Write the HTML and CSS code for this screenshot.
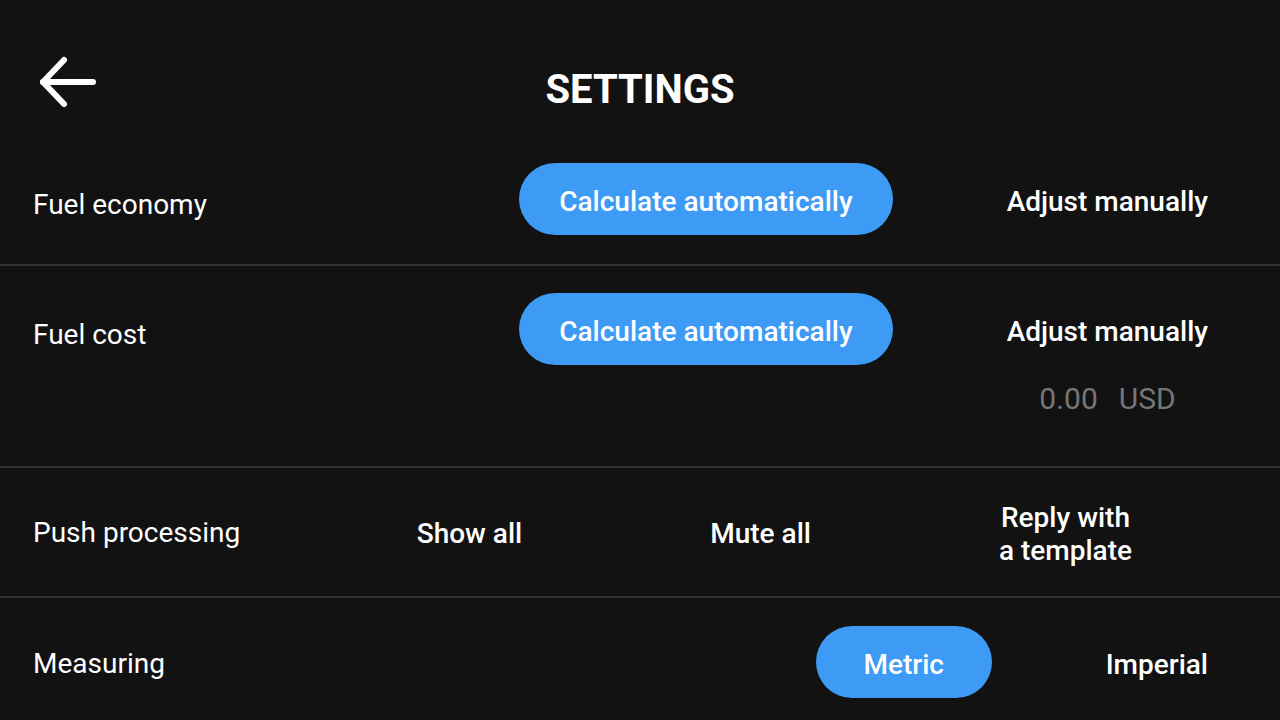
FILE: index.html
```html
<!DOCTYPE html>
<html lang="en">
<head>
<meta charset="utf-8">
<title>Settings</title>
<link rel="stylesheet" href="styles.css">
</head>
<body>
<div class="screen">
  <header class="header">
    <button class="back" aria-label="Back">
      <svg width="62" height="56" viewBox="0 0 62 56" fill="none" stroke="#fff" stroke-width="6" stroke-linecap="round" stroke-linejoin="round">
        <path d="M6 27 H56"/>
        <path d="M27 5 L6 27 L27 49"/>
      </svg>
    </button>
    <h1 class="title">SETTINGS</h1>
  </header>

  <section class="row">
    <div class="label low">Fuel economy</div>
    <div class="options">
      <span class="opt active">Calculate automatically</span>
      <span class="opt">Adjust manually</span>
    </div>
  </section>

  <section class="row row-tall">
    <div class="label">Fuel cost</div>
    <div class="col">
      <div class="options">
        <span class="opt active">Calculate automatically</span>
        <span class="opt">Adjust manually</span>
      </div>
      <div class="cost"><span>0.00</span><span>USD</span></div>
    </div>
  </section>

  <section class="row">
    <div class="label">Push processing</div>
    <div class="options options-wide">
      <span class="opt">Show all</span>
      <span class="opt">Mute all</span>
      <span class="opt multi">Reply with<br>a template</span>
    </div>
  </section>

  <section class="row last">
    <div class="label">Measuring</div>
    <div class="options">
      <span class="opt active metric">Metric</span>
      <span class="opt">Imperial</span>
    </div>
  </section>
</div>
</body>
</html>
```

FILE: styles.css
```css
* { box-sizing: border-box; }
html, body {
  margin: 0;
  padding: 0;
  background: #121212;
}
body {
  font-family: Roboto, "Noto Sans", "Liberation Sans", sans-serif;
  color: #fff;
  width: 1280px;
  height: 720px;
  overflow: hidden;
}
.screen {
  display: flex;
  flex-direction: column;
}
.header {
  height: 136px;
  position: relative;
  display: flex;
  justify-content: center;
  padding-top: 65px;
}
.back {
  position: absolute;
  left: 37px;
  top: 55px;
  background: none;
  border: 0;
  padding: 0;
  cursor: pointer;
  line-height: 0;
}
.title {
  margin: 0;
  font-size: 40px;
  font-weight: 700;
  line-height: 50px;
}
.row {
  display: flex;
  align-items: center;
  justify-content: space-between;
  height: 130px;
  padding: 28px 32px 30px 33px;
  border-bottom: 2px solid #333;
}
.row-tall {
  height: 202px;
  align-items: flex-start;
  padding-top: 27px;
}
.row-tall .label {
  margin-top: 21px;
}
.row.last {
  border-bottom: 0;
}
.label {
  font-size: 28px;
  line-height: 34px;
  padding-top: 4px;
}
.label.low {
  padding-top: 12px;
}
.col {
  display: flex;
  flex-direction: column;
  align-items: flex-end;
}
.options {
  display: flex;
  align-items: center;
  gap: 74px;
}
.options-wide {
  gap: 108px;
  margin-right: 76px;
}
.opt {
  display: inline-flex;
  align-items: center;
  justify-content: center;
  height: 72px;
  padding: 4px 40px 0;
  border-radius: 36px;
  font-size: 28px;
  font-weight: 500;
  line-height: 33px;
  white-space: nowrap;
  text-align: center;
}
.opt.active {
  background: #3d9af5;
}
.opt.metric {
  width: 176px;
}
.opt.multi {
  white-space: normal;
  padding-top: 6px;
}
.cost {
  display: flex;
  gap: 21px;
  width: 281px;
  justify-content: center;
  margin-top: 16px;
  font-size: 30px;
  color: #767676;
}
```
